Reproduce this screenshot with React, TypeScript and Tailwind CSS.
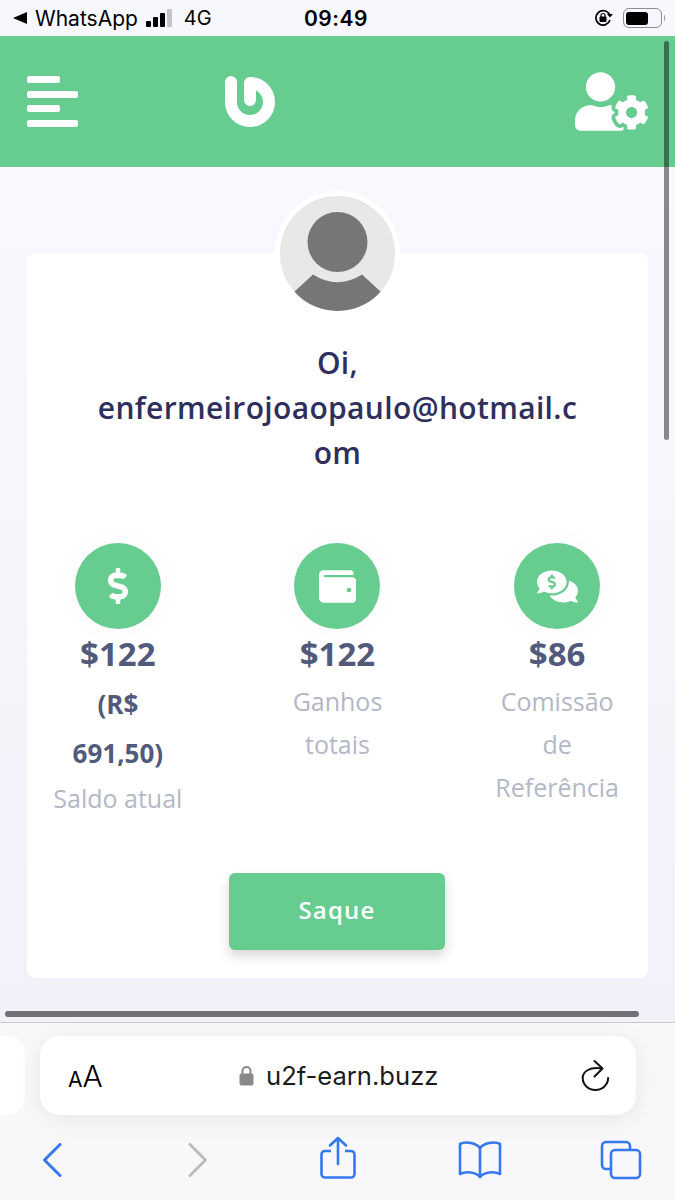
import { FaCommentsDollar, FaDollarSign, FaUserCog, FaWallet } from "react-icons/fa";

const sans = "font-['Open_Sans',sans-serif]";
const system = "font-['Inter',sans-serif]";

function StatusBar() {
  return (
    <div className={`flex h-9 shrink-0 items-center bg-[#f7f8fd] pl-[13px] pr-[10px] text-black ${system}`}>
      <div className="flex w-[260px] items-center">
        <svg width="14" height="12" viewBox="0 0 14 12" className="mr-[8px]">
          <path d="M14 0v12L0 6z" fill="#000" />
        </svg>
        <span className="text-[21px] leading-none">WhatsApp</span>
        <div className="ml-[8px] flex items-end gap-[2px]">
          <div className="h-[6px] w-[5px] rounded-[1px] bg-black" />
          <div className="h-[10px] w-[5px] rounded-[1px] bg-black" />
          <div className="h-[14px] w-[5px] rounded-[1px] bg-black" />
          <div className="h-[18px] w-[5px] rounded-[1px] bg-[#c4c4c6]" />
        </div>
        <span className="ml-[12px] text-[20px] leading-none">4G</span>
      </div>
      <span className="ml-[31px] text-[21px] font-semibold leading-none tracking-[0.5px]">09:49</span>
      <div className="ml-auto flex items-center">
        <svg width="20" height="18" viewBox="0 0 20 18" className="mr-[9px]">
          <path d="M15.5 5.5A7.2 7.2 0 1 0 16 11" fill="none" stroke="#000" strokeWidth="1.7" />
          <path d="M13 5h6l-3 3.5z" fill="#000" />
          <rect x="5.5" y="7.5" width="7" height="5.5" rx="1" fill="#000" />
          <path d="M7 8V6.5a2 2 0 0 1 4 0V8" fill="none" stroke="#000" strokeWidth="1.2" />
        </svg>
        <div className="h-5 w-[39px] rounded-[6px] border border-[#8e8e90] p-[2.5px]">
          <div className="h-full w-[22px] rounded-[3px] bg-black" />
        </div>
        <div className="ml-[2px] h-[6px] w-[1.5px] rounded-r-sm bg-[#a0a0a2]" />
      </div>
    </div>
  );
}

function Header() {
  return (
    <header className="relative flex h-[131px] shrink-0 items-center bg-[#66cc90] pl-[27px] pr-[27px]">
      <div className="flex w-[51px] flex-col items-start gap-[7.5px]">
        <div className="h-[7px] w-[33px] rounded-[2px] bg-white" />
        <div className="h-[7px] w-[51px] rounded-[2px] bg-white" />
        <div className="h-[7px] w-[33px] rounded-[2px] bg-white" />
        <div className="h-[7px] w-[51px] rounded-[2px] bg-white" />
      </div>
      <svg width="52" height="52" viewBox="0 0 52 52" className="ml-[146px] -mt-[1px]">
        <path
          d="M7 7V27a19 19 0 1 0 19-19M26 8V25"
          fill="none"
          stroke="#fff"
          strokeWidth="12"
          strokeLinecap="round"
        />
      </svg>
      <FaUserCog className="ml-auto -mt-[1px] text-white" size={73} />
    </header>
  );
}

function Stat({
  icon,
  amount,
  note,
  label,
}: {
  icon: React.ReactNode;
  amount: string;
  note?: string;
  label: string;
}) {
  return (
    <div className="flex flex-col items-center">
      <div className="flex h-[86px] w-[86px] items-center justify-center rounded-full bg-[#66cc90] text-white shadow-[0_0_30px_rgba(0,0,0,0.03)]">
        {icon}
      </div>
      <div className="mt-[2px] text-[33px] font-bold leading-[46px] text-[#525a7c]">{amount}</div>
      {note && (
        <div className="mt-[3px] -mb-[4px] w-[110px] text-center text-[26px] font-bold leading-[49px] text-[#525a7c]">
          {note}
        </div>
      )}
      <div className="mt-[3px] w-[140px] text-center text-[25px] leading-[43px] text-[#b4b7c6]">{label}</div>
    </div>
  );
}

function Card() {
  return (
    <section className="relative h-[725px] rounded-[8px] bg-white pt-[87px]">
      <div className="absolute -top-[62px] left-[248px] h-[125px] w-[125px] overflow-hidden rounded-full border-[5px] border-white bg-[#e8e8e8]">
        <svg viewBox="0 0 115 115" className="h-full w-full">
          <circle cx="57.500" cy="46" r="30" fill="#767676" />
          <path d="M14 96 L33 78.500 Q57.500 94 82 78.500 L101 96 A57.500 57.500 0 0 1 14 96Z" fill="#767676" />
        </svg>
      </div>
      <h1 className="mx-auto w-[490px] break-all text-center text-[30px] font-semibold leading-[45px] tracking-[0.35px] text-[#2f2f5e]">
        <span className="block">Oi,</span>
        enfermeirojoaopaulo@hotmail.com
      </h1>
      <div className="-ml-[19px] mt-[68px] grid h-[300px] w-[659px] grid-cols-3">
        <Stat icon={<FaDollarSign size={36} />} amount="$122" note="(R$ 691,50)" label="Saldo atual" />
        <Stat icon={<FaWallet size={37} />} amount="$122" label="Ganhos totais" />
        <Stat icon={<FaCommentsDollar size={41} />} amount="$86" label="Comissão de Referência" />
      </div>
      <button
        type="button"
        className="ml-[202px] mt-[30px] block h-[77px] w-[216px] rounded-[6px] bg-[#66cc90] pb-[3px] text-[24px] font-semibold tracking-[1.2px] text-white shadow-[0_6px_12px_rgba(0,0,0,0.16)]"
      >
        Saque
      </button>
    </section>
  );
}

function Toolbar() {
  return (
    <div className={`flex h-[178px] shrink-0 flex-col border-t border-[#c9c9cc] bg-[#f8f8fa] ${system}`}>
      <div className="mt-[13px] flex h-[79px] gap-[15px]">
        <div className="h-full w-[25px] rounded-r-[18px] bg-white" />
        <div className="flex w-[596px] items-center rounded-[20px] bg-white pl-[28px] pr-[26px] shadow-[0_4px_24px_rgba(0,0,0,0.07)]">
          <span className="flex w-[171px] items-baseline font-light text-black">
            <span className="text-[21px] font-normal leading-none">A</span>
            <span className="text-[30px] leading-none">A</span>
          </span>
          <svg width="15" height="21" viewBox="0 0 15 21" className="mr-[12px]">
            <path d="M3.5 9V6a4 4 0 0 1 8 0v3" fill="none" stroke="#8a8a8d" strokeWidth="2" />
            <rect x="0.5" y="8.5" width="14" height="12" rx="2" fill="#8a8a8d" />
          </svg>
          <span className="text-[25.600px] leading-none text-[#1b1b1d]">u2f-earn.buzz</span>
          <svg width="30" height="34" viewBox="0 0 30 34" className="ml-auto" fill="none" stroke="#111" strokeWidth="2" strokeLinecap="round" strokeLinejoin="round">
            <path d="M22 9.500C9 7.500 2.700 13 2.700 19a12.700 12 0 0 0 25.400 0" />
            <path d="M14.500 2l8 7.500-8 8" />
          </svg>
        </div>
      </div>
      <nav className="relative mt-[22px] h-[50px]">
        <svg width="20" height="34" viewBox="0 0 20 34" className="absolute left-[42px] top-[6px]" fill="none" stroke="#3478f0" strokeWidth="3">
          <path d="M18 1.500 2.500 17 18 32.500" strokeLinecap="round" strokeLinejoin="round" />
        </svg>
        <svg width="20" height="34" viewBox="0 0 20 34" className="absolute left-[188px] top-[6px]" fill="none" stroke="#bcbcbe" strokeWidth="3">
          <path d="M2 1.500 17.500 17 2 32.500" strokeLinecap="round" strokeLinejoin="round" />
        </svg>
        <svg width="36" height="44" viewBox="0 0 36 44" className="absolute left-[320px] -top-[1px]" fill="none" stroke="#3478f0" strokeWidth="2.600">
          <path d="M11 15H5a3.500 3.500 0 0 0-3.500 3.500V38A3.500 3.500 0 0 0 5 41.500h26a3.500 3.500 0 0 0 3.500-3.500V18.500A3.500 3.500 0 0 0 31 15h-6" />
          <path d="M18 28V2M10 9.500 18 2l8 7.500" strokeLinecap="round" strokeLinejoin="round" />
        </svg>
        <svg width="44" height="38" viewBox="0 0 44 38" className="absolute left-[458px] top-[4px]" fill="none" stroke="#3478f0" strokeWidth="2.600" strokeLinejoin="round">
          <path d="M22 7C18 2 8 0 2 3V33C8 30 18 31 22 36C26 31 36 30 42 33V3C36 0 26 2 22 7Z" />
          <path d="M22 7V36" />
        </svg>
        <svg width="42" height="40" viewBox="0 0 42 40" className="absolute left-[600px] top-[3px]" fill="none" stroke="#3478f0" strokeWidth="2.600">
          <path d="M10 29H6a4 4 0 0 1-4-4V6a4 4 0 0 1 4-4h20a4 4 0 0 1 4 4v4" />
          <rect x="11" y="10" width="29" height="28" rx="4" />
        </svg>
      </nav>
    </div>
  );
}

export default function App() {
  return (
    <div className={`relative flex h-[1200px] w-[675px] flex-col overflow-hidden bg-[#f4f5fb] ${sans}`}>
      <StatusBar />
      <Header />
      <main className="flex-1 bg-linear-to-b from-[#f8f9fe] to-[#f1f2f9] px-[27px] pt-[86px]">
        <Card />
      </main>
      <Toolbar />
      <div className="absolute left-[664px] top-[41px] h-[399px] w-[5px] rounded-full bg-black/45" />
      <div className="absolute left-[5px] top-[1011px] h-[6px] w-[634px] rounded-full bg-[#6f7076]" />
    </div>
  );
}
